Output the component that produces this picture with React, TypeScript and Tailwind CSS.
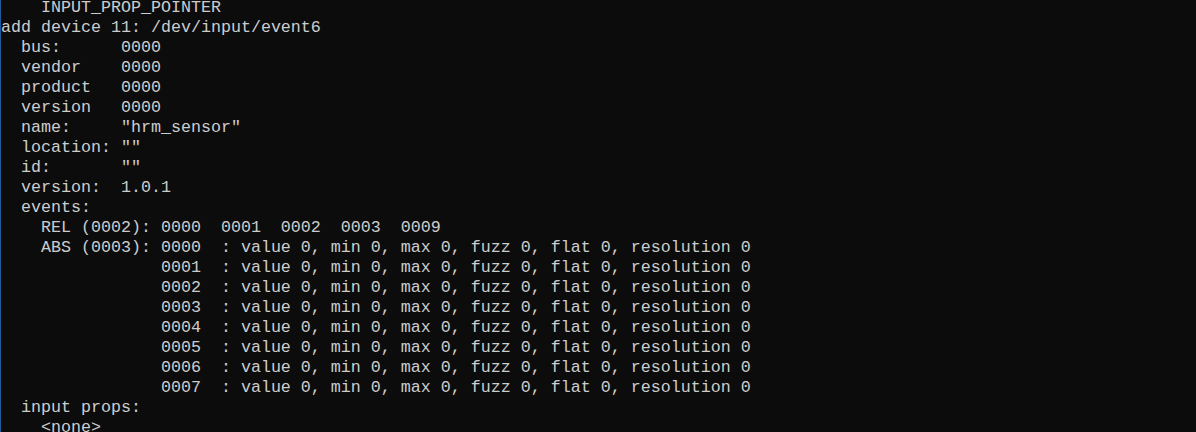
import React from "react";

const lines: string[] = [
  "    INPUT_PROP_POINTER",
  "add device 11: /dev/input/event6",
  "  bus:      0000",
  "  vendor    0000",
  "  product   0000",
  "  version   0000",
  '  name:     "hrm_sensor"',
  '  location: ""',
  '  id:       ""',
  "  version:  1.0.1",
  "  events:",
  "    REL (0002): 0000  0001  0002  0003  0009",
  "    ABS (0003): 0000  : value 0, min 0, max 0, fuzz 0, flat 0, resolution 0",
  "                0001  : value 0, min 0, max 0, fuzz 0, flat 0, resolution 0",
  "                0002  : value 0, min 0, max 0, fuzz 0, flat 0, resolution 0",
  "                0003  : value 0, min 0, max 0, fuzz 0, flat 0, resolution 0",
  "                0004  : value 0, min 0, max 0, fuzz 0, flat 0, resolution 0",
  "                0005  : value 0, min 0, max 0, fuzz 0, flat 0, resolution 0",
  "                0006  : value 0, min 0, max 0, fuzz 0, flat 0, resolution 0",
  "                0007  : value 0, min 0, max 0, fuzz 0, flat 0, resolution 0",
  "  input props:",
  "    <none>",
];

export default function App() {
  return (
    <div className="w-[1196px] h-[432px] overflow-hidden bg-[#0c0c0c] border-l border-[#1e5a9c]">
      <div className="-mt-[2px] text-[#cccccc] text-[16.6667px] leading-[20px] font-['Liberation_Mono',monospace]">
        {lines.map((l, i) => (
          <div key={i} className="whitespace-pre h-[20px]">
            {l}
          </div>
        ))}
      </div>
    </div>
  );
}
